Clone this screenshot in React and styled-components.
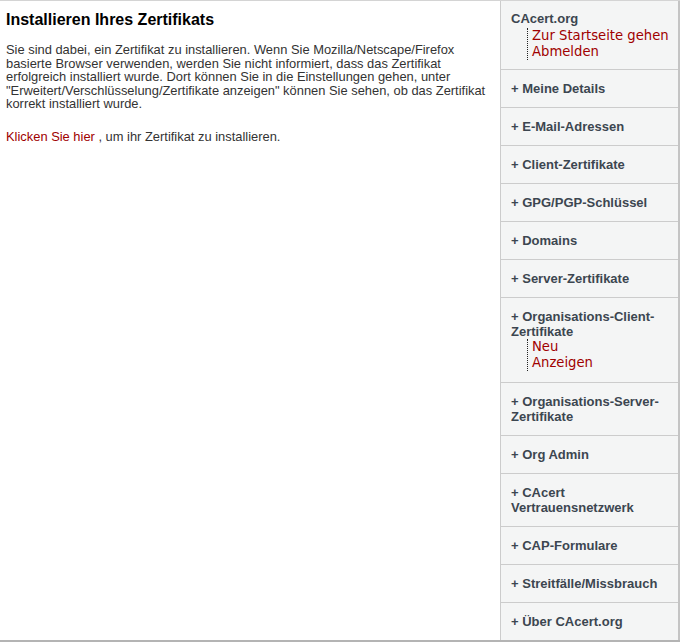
import React from 'react'
import styled, { createGlobalStyle } from 'styled-components'

const GlobalStyle = createGlobalStyle`
  body {
    margin: 0;
    background: #fff;
    font-family: "Liberation Sans", Arial, sans-serif;
  }
`

const Page = styled.div`
  display: flex;
  width: 680px;
  border-top: 1px solid #d4d4d4;
  border-bottom: 2px solid #b4b4b4;
`

const Main = styled.main`
  flex: 1;
  padding: 0 6px;
  color: #333;
  font-size: 12.9px;
`

const Title = styled.h2`
  margin: 9px 0 14px;
  font-size: 16px;
  line-height: 19px;
  color: #000;
`

const Para = styled.p`
  margin: 0 0 19px;
  line-height: 13.5px;
`

const Link = styled.a`
  color: #a00000;
  text-decoration: none;
`

const Sidebar = styled.nav`
  width: 177px;
  background: #f4f5f5;
  border-left: 1px solid #cccccc;
  border-right: 2px solid #c4c4c4;
`

const Block = styled.div`
  padding: ${p => (p.$head ? '10px 10px 9px' : '11px 10px')};
  border-bottom: 1px solid #cccccc;
  &:last-child {
    border-bottom: none;
  }
`

const Heading = styled.div`
  font-size: 13px;
  line-height: 15px;
  font-weight: bold;
  color: #3c4650;
`

const SubList = styled.ul`
  list-style: none;
  margin: ${p => (p.$head ? '2px' : '0')} 0 0 16px;
  padding: 0 0 0 4px;
  border-left: 1px dotted #222;
`

const SubLink = styled.a`
  display: block;
  white-space: nowrap;
  font-family: "DejaVu Sans", Verdana, sans-serif;
  font-size: 13.2px;
  line-height: 16px;
  color: #a00000;
  text-decoration: none;
`

const menu = [
  'Meine Details',
  'E-Mail-Adressen',
  'Client-Zertifikate',
  'GPG/PGP-Schlüssel',
  'Domains',
  'Server-Zertifikate',
  { label: 'Organisations-Client-Zertifikate', subs: ['Neu', 'Anzeigen'] },
  'Organisations-Server-Zertifikate',
  'Org Admin',
  'CAcert Vertrauensnetzwerk',
  'CAP-Formulare',
  'Streitfälle/Missbrauch',
  'Über CAcert.org',
]

export default function App() {
  return (
    <>
      <GlobalStyle />
      <Page>
        <Main>
          <Title>Installieren Ihres Zertifikats</Title>
          <Para>
            Sie sind dabei, ein Zertifikat zu installieren. Wenn Sie Mozilla/Netscape/Firefox
            basierte Browser verwenden, werden Sie nicht informiert, dass das Zertifikat
            erfolgreich installiert wurde. Dort können Sie in die Einstellungen gehen, unter
            "Erweitert/Verschlüsselung/Zertifikate anzeigen" können Sie sehen, ob das Zertifikat
            korrekt installiert wurde.
          </Para>
          <Para>
            <Link href="#">Klicken Sie hier</Link> , um ihr Zertifikat zu installieren.
          </Para>
        </Main>
        <Sidebar>
          <Block $head>
            <Heading>CAcert.org</Heading>
            <SubList $head>
              <li><SubLink href="#">Zur Startseite gehen</SubLink></li>
              <li><SubLink href="#">Abmelden</SubLink></li>
            </SubList>
          </Block>
          {menu.map(item => {
            const label = typeof item === 'string' ? item : item.label
            return (
              <Block key={label}>
                <Heading>+ {label}</Heading>
                {item.subs && (
                  <SubList>
                    {item.subs.map(s => (
                      <li key={s}><SubLink href="#">{s}</SubLink></li>
                    ))}
                  </SubList>
                )}
              </Block>
            )
          })}
        </Sidebar>
      </Page>
    </>
  )
}
